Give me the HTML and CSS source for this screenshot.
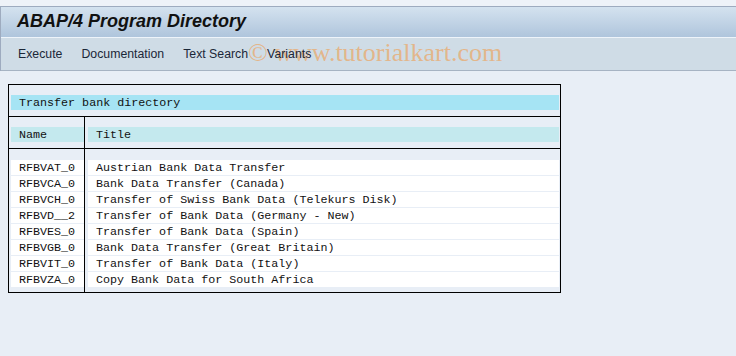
FILE: index.html
```html
<!DOCTYPE html>
<html>
<head>
  <meta charset="UTF-8">
  <title>ABAP/4 Program Directory</title>
  <link rel="stylesheet" href="styles.css">
</head>
<body>
  <div class="top-strip"></div>
  <div class="sap-header">
    <div class="title-bar">
      <h1>ABAP/4 Program Directory</h1>
    </div>
    <div class="toolbar">
      <span class="tool">Execute</span>
      <span class="tool">Documentation</span>
      <span class="tool">Text Search</span>
      <span class="tool">Variants</span>
      <span class="watermark">© www.tutorialkart.com</span>
    </div>
  </div>

  <div class="list">
    <div class="list-caption">
      <div class="band band-caption">Transfer bank directory</div>
    </div>

    <div class="list-head">
      <div class="col-name">
        <div class="band band-head">Name</div>
      </div>
      <div class="col-title">
        <div class="band band-head">Title</div>
      </div>
    </div>

    <div class="list-body">
      <div class="col-name">
        <div class="cell">RFBVAT_0</div>
        <div class="cell">RFBVCA_0</div>
        <div class="cell">RFBVCH_0</div>
        <div class="cell">RFBVD__2</div>
        <div class="cell">RFBVES_0</div>
        <div class="cell">RFBVGB_0</div>
        <div class="cell">RFBVIT_0</div>
        <div class="cell">RFBVZA_0</div>
      </div>
      <div class="col-title">
        <div class="cell">Austrian Bank Data Transfer</div>
        <div class="cell">Bank Data Transfer (Canada)</div>
        <div class="cell">Transfer of Swiss Bank Data (Telekurs Disk)</div>
        <div class="cell">Transfer of Bank Data (Germany - New)</div>
        <div class="cell">Transfer of Bank Data (Spain)</div>
        <div class="cell">Bank Data Transfer (Great Britain)</div>
        <div class="cell">Transfer of Bank Data (Italy)</div>
        <div class="cell">Copy Bank Data for South Africa</div>
      </div>
    </div>
  </div>
</body>
</html>
```

FILE: styles.css
```css
:root {
  --page-bg: #e8eef6;
  --strip-bg: #eef2f8;
  --title-top: #d4e2ef;
  --title-bottom: #afc5dc;
  --toolbar-bg: #cfdce6;
  --frame-line: #9eabbf;
  --caption-band: #a6e4f4;
  --head-band: #c4e9ee;
  --mark-color: rgba(237, 163, 92, 0.68);
}

body {
  margin: 0;
  background-color: var(--page-bg);
  font-family: "Liberation Sans", Arial, sans-serif;
  color: #000;
}

.top-strip {
  height: 6px;
  background-color: var(--strip-bg);
  border-bottom: 1px solid var(--frame-line);
}

.sap-header {
  border-left: 1px solid var(--frame-line);
}

.title-bar {
  height: 30px;
  background: linear-gradient(to bottom, var(--title-top), var(--title-bottom));
}

.title-bar h1 {
  margin: 0;
  padding-left: 16px;
  font-size: 18px;
  font-weight: bold;
  font-style: italic;
  line-height: 29px;
  color: #111;
}

.toolbar {
  position: relative;
  display: flex;
  align-items: center;
  gap: 19px;
  height: 32px;
  padding-left: 17px;
  background-color: var(--toolbar-bg);
  border-top: 1px solid #eef4fa;
  border-bottom: 1px solid #a6b3c3;
  font-size: 12.3px;
  color: #1b2738;
}

.tool {
  position: relative;
  z-index: 1;
}

.watermark {
  position: absolute;
  left: 247px;
  top: 2px;
  font-family: "Liberation Serif", "Times New Roman", serif;
  font-size: 26px;
  line-height: 26px;
  color: var(--mark-color);
  white-space: nowrap;
}

.list {
  width: 551px;
  margin: 13px 0 0 8px;
  border: 1px solid #000;
  font-family: "Liberation Mono", "Courier New", monospace;
  font-size: 11.7px;
  color: #111;
}

.band {
  height: 14px;
  padding-top: 1px;
  line-height: 15px;
  padding-left: 8px;
  white-space: nowrap;
}

.band-caption { background-color: var(--caption-band); }
.band-head { background-color: var(--head-band); }

.list-caption {
  padding: 10px 1px 6px 2px;
  border-bottom: 1px solid #000;
}

.list-head,
.list-body {
  display: flex;
}

.list-head {
  border-bottom: 1px solid #000;
}

.col-name {
  width: 73px;
  padding-left: 2px;
  border-right: 1px solid #000;
}

.col-title {
  flex: 1;
  padding-left: 3px;
  padding-right: 1px;
}

.list-head .col-name,
.list-head .col-title {
  padding-top: 10px;
  padding-bottom: 6px;
}

.list-body .col-name,
.list-body .col-title {
  padding-top: 11px;
  padding-bottom: 4px;
}

.cell {
  height: 14px;
  padding-top: 1px;
  line-height: 15px;
  margin-bottom: 1px;
  padding-left: 8px;
  background-color: #fff;
  white-space: nowrap;
}
```
